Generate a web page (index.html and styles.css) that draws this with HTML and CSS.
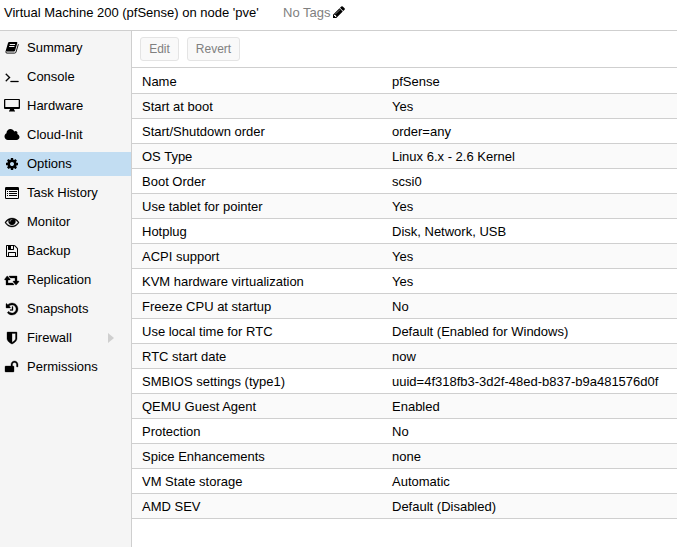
FILE: index.html
```html
<!DOCTYPE html>
<html lang="en">
<head>
<meta charset="utf-8">
<title>Virtual Machine 200</title>
<link rel="stylesheet" href="styles.css">
</head>
<body>
<header class="title-bar">
  <span class="title">Virtual Machine 200 (pfSense) on node 'pve'</span>
  <span class="tags">No Tags</span>
  <svg class="pencil" viewBox="0 0 1792 1792"><path d="M491 1536l91-91-235-235-91 91v107h128v128h107zm523-928q0-22-22-22-10 0-17 7l-542 542q-7 7-7 17 0 22 22 22 10 0 17-7l542-542q7-7 7-17zm-54-192l416 416-832 832h-416v-416zm683 96q0 53-37 90l-166 166-416-416 166-165q36-38 90-38 53 0 91 38l235 234q37 39 37 91z"/></svg>
</header>
<div class="body">
  <nav class="menu">
    <a class="item"><svg class="icon" viewBox="0 0 16 14"><path fill-rule="evenodd" d="M5.200 1H12.600Q13.600 1.100 13.300 2.100L11.100 9.500Q10.800 10.400 9.900 10.400H2.400Q1.500 10.400 1.800 9.400L4 2Q4.300 1 5.200 1zM5.900 3.100L5.600 3.900H10.900L11.200 3.100zM5.300 5.100L5 5.900H10.300L10.600 5.100z"/><path class="line" d="M14.400 3.200L12 11Q11.700 12.100 10.700 12.100H3Q1.700 12.100 1.600 10.500"/></svg>Summary</a>
    <a class="item"><svg class="icon bold" viewBox="-128 0 2048 1792"><path d="M649 983l-466 466q-10 10-23 10t-23-10l-50-50q-10-10-10-23t10-23l393-393-393-393q-10-10-10-23t10-23l50-50q10-10 23-10t23 10l466 466q10 10 10 23t-10 23zm1079 457v64q0 14-9 23t-23 9h-960q-14 0-23-9t-9-23v-64q0-14 9-23t23-9h960q14 0 23 9t9 23z"/></svg>Console</a>
    <a class="item"><svg class="icon" viewBox="0 0 16 14"><path fill-rule="evenodd" d="M1 0H15Q16 0 16 1V9Q16 10 15 10H10Q10 11 11 12V12.500H5V12Q6 11 6 10H1Q0 10 0 9V1Q0 0 1 0zM1.300 1V8H14.700V1z"/></svg>Hardware</a>
    <a class="item"><svg class="icon" viewBox="0 0 2048 1792"><path d="M1984 1152q0 159-112.500 271.500t-271.500 112.500h-1088q-185 0-316.500-131.500t-131.500-316.500q0-132 71-241.500t187-163.500q-2-28-2-43 0-212 150-362t362-150q158 0 286.500 88t187.500 230q70-62 166-62 106 0 181 75t75 181q0 75-41 138 129 30 213 134.500t84 239.500z"/></svg>Cloud-Init</a>
    <a class="item selected"><svg class="icon" viewBox="-128 0 2048 1792"><path d="M1152 896q0-106-75-181t-181-75-181 75-75 181 75 181 181 75 181-75 75-181zm512-109v222q0 12-8 23t-20 13l-185 28q-19 54-39 91 35 50 107 138 10 12 10 25t-9 23q-27 37-99 108t-94 71q-12 0-26-9l-138-108q-44 23-91 38-16 136-29 186-7 28-36 28h-222q-14 0-24.500-8.500t-11.500-21.500l-28-184q-49-16-90-37l-141 107q-10 9-25 9-14 0-25-11-126-114-165-168-7-10-7-23 0-12 8-23 15-21 51-66.500t54-70.500q-27-50-41-99l-183-27q-13-2-21-12.500t-8-23.500v-222q0-12 8-23t19-13l186-28q14-46 39-92-40-57-107-138-10-12-10-24 0-10 9-23 26-36 98.500-107.500t94.500-71.500q13 0 26 10l138 107q44-23 91-38 16-136 29-186 7-28 36-28h222q14 0 24.500 8.500t11.500 21.500l28 184q49 16 90 37l142-107q9-9 24-9 13 0 25 10 129 119 165 170 7 8 7 22 0 12-8 23-15 21-51 66.500t-54 70.500q26 50 41 98l183 28q13 2 21 12.500t8 23.500z"/></svg>Options</a>
    <a class="item"><svg class="icon" viewBox="-128 0 2048 1792"><path fill-rule="evenodd" d="M160 128h1472q160 0 160 160v1216q0 160-160 160h-1472q-160 0-160-160v-1216q0-160 160-160zM128 544v960q0 32 32 32h1472q32 0 32-32v-960q0-32-32-32h-1472q-32 0-32 32zM256 640h128v128h-128zM256 896h128v128h-128zM256 1152h128v128h-128zM512 640h1024v128h-1024zM512 896h1024v128h-1024zM512 1152h1024v128h-1024z"/></svg>Task History</a>
    <a class="item"><svg class="icon bold" viewBox="-128 0 2048 1792"><path d="M1664 960q-152-236-381-353 61 104 61 225 0 185-131.500 316.500t-316.500 131.500-316.500-131.500-131.500-316.500q0-121 61-225-229 117-381 353 133 205 333.500 326.500t434.500 121.500 434.500-121.500 333.500-326.500zm-720-384q0-20-14-34t-34-14q-125 0-214.500 89.500t-89.500 214.500q0 20 14 34t34 14 34-14 14-34q0-86 61-147t147-61q20 0 34-14t14-34zm848 384q0 34-20 69-140 230-376.500 368.500t-499.500 138.500-499.500-139-376.500-368q-20-35-20-69t20-69q140-229 376.500-368t499.500-139 499.500 139 376.500 368q20 35 20 69z"/></svg>Monitor</a>
    <a class="item"><svg class="icon" viewBox="-128 0 2048 1792"><path d="M512 1536h768v-384h-768v384zm896 0h128v-896q0-14-10-38.500t-20-34.500l-281-281q-10-10-34-20t-39-10v416q0 40-28 68t-68 28h-576q-40 0-68-28t-28-68v-416h-128v1280h128v-416q0-40 28-68t68-28h832q40 0 68 28t28 68v416zm-384-928v-320q0-13-9.500-22.500t-22.500-9.500h-192q-13 0-22.500 9.500t-9.500 22.500v320q0 13 9.500 22.500t22.500 9.500h192q13 0 22.500-9.500t9.500-22.500zm640 32v928q0 40-28 68t-68 28h-1344q-40 0-68-28t-28-68v-1344q0-40 28-68t68-28h928q40 0 88 20t76 48l280 280q28 28 48 76t20 88z"/></svg>Backup</a>
    <a class="item"><svg class="icon bold" viewBox="-64 64 2048 1792"><path d="M1216 1568q0 13-9.500 22.500t-22.500 9.500h-960q-8 0-13.500-2t-9-7-5.500-8-3-11.500-1-11.500v-600h-128q-26 0-45-19t-19-45q0-24 15-41l288-384q19-22 49-22t49 22l320 384q15 17 15 41 0 26-19 45t-45 19h-224v384h576q16 0 25 11l160 192q7 10 7 21zm640-416q0 24-15 41l-320 384q-20 23-49 23t-49-23l-320-384q-15-17-15-41 0-26 19-45t45-19h192v-384h-576q-16 0-25-12l-160-192q-7-9-7-20 0-13 9.500-22.500t22.500-9.500h960q8 0 13.500 2t9 7 5.500 8 3 11.500 1 11.500v600h192q26 0 45 19t19 45z"/></svg>Replication</a>
    <a class="item"><svg class="icon bold" viewBox="-128 0 2048 1792"><path d="M1664 896q0 156-61 298t-164 245-245 164-298 61q-172 0-327-72.500t-264-204.500q-7-10-6.500-22.500t8.500-20.500l137-138q10-9 25-9 16 2 23 12 73 95 179 147t225 52q104 0 198.500-40.500t163.500-109.500 109.500-163.500 40.500-198.500-40.500-198.500-109.500-163.500-163.500-109.500-198.500-40.500q-98 0-188 35.500t-160 101.500l137 138q31 30 14 69-17 40-59 40h-448q-26 0-45-19t-19-45v-448q0-42 40-59 39-17 69 14l130 129q107-101 244.500-156.500t284.500-55.500q156 0 298 61t245 164 164 245 61 298zm-640-288v448q0 14-9 23t-23 9h-320q-14 0-23-9t-9-23v-64q0-14 9-23t23-9h224v-352q0-14 9-23t23-9h64q14 0 23 9t9 23z"/></svg>Snapshots</a>
    <a class="item"><svg class="icon bold" viewBox="-128 0 2048 1792"><path d="M1344 960v-640h-448v1137q119-63 213-137 235-184 235-360zm192-768v768q0 86-33.500 170.500t-83 150-118 127.500-126.500 103-121 77.500-89.500 49.500-42.500 20q-12 6-26 6t-26-6q-16-7-42.500-20t-89.500-49.500-121-77.500-126.500-103-118-127.500-83-150-33.500-170.500v-768q0-26 19-45t45-19h1152q26 0 45 19t19 45z"/></svg>Firewall<svg class="arrow" viewBox="0 0 6 10"><path d="M0 0L6 5L0 10z"/></svg></a>
    <a class="item"><svg class="icon bold" viewBox="-64 0 2048 1792"><path d="M1728 576v256q0 26-19 45t-45 19h-64q-26 0-45-19t-19-45v-256q0-106-75-181t-181-75-181 75-75 181v192h96q40 0 68 28t28 68v576q0 40-28 68t-68 28h-960q-40 0-68-28t-28-68v-576q0-40 28-68t68-28h672v-192q0-185 131.500-316.500t316.500-131.500 316.500 131.500 131.500 316.500z"/></svg>Permissions</a>
  </nav>
  <main class="content">
    <div class="toolbar"><button class="btn edit" disabled>Edit</button><button class="btn revert" disabled>Revert</button></div>
    <div class="grid">
      <div class="row"><span>Name</span><span>pfSense</span></div>
      <div class="row"><span>Start at boot</span><span>Yes</span></div>
      <div class="row"><span>Start/Shutdown order</span><span>order=any</span></div>
      <div class="row"><span>OS Type</span><span>Linux 6.x - 2.6 Kernel</span></div>
      <div class="row"><span>Boot Order</span><span>scsi0</span></div>
      <div class="row"><span>Use tablet for pointer</span><span>Yes</span></div>
      <div class="row"><span>Hotplug</span><span>Disk, Network, USB</span></div>
      <div class="row"><span>ACPI support</span><span>Yes</span></div>
      <div class="row"><span>KVM hardware virtualization</span><span>Yes</span></div>
      <div class="row"><span>Freeze CPU at startup</span><span>No</span></div>
      <div class="row"><span>Use local time for RTC</span><span>Default (Enabled for Windows)</span></div>
      <div class="row"><span>RTC start date</span><span>now</span></div>
      <div class="row"><span>SMBIOS settings (type1)</span><span>uuid=4f318fb3-3d2f-48ed-b837-b9a481576d0f</span></div>
      <div class="row"><span>QEMU Guest Agent</span><span>Enabled</span></div>
      <div class="row"><span>Protection</span><span>No</span></div>
      <div class="row"><span>Spice Enhancements</span><span>none</span></div>
      <div class="row"><span>VM State storage</span><span>Automatic</span></div>
      <div class="row"><span>AMD SEV</span><span>Default (Disabled)</span></div>
    </div>
  </main>
</div>
</body>
</html>
```
FILE: styles.css
```css
* { box-sizing: border-box; }
body {
  margin: 0;
  height: 547px;
  display: flex;
  flex-direction: column;
  overflow: hidden;
  background: #fff;
  color: #000;
  font: 13px/16px "Liberation Sans", Arial, sans-serif;
  white-space: nowrap;
}
.title-bar {
  height: 31px;
  padding: 5px 0 0 4px;
  display: flex;
  align-items: flex-start;
  border-bottom: 1px solid #cfcfcf;
}
.title { width: 279px; }
.tags { width: 49px; color: #808080; }
.pencil { width: 14px; height: 14px; }
.body { flex: 1; display: flex; }
.menu {
  width: 132px;
  padding-top: 5px;
  display: flex;
  flex-direction: column;
  gap: 5px;
  background: #f5f5f5;
  border-right: 1px solid #cfcfcf;
}
.item {
  height: 24px;
  padding-left: 4px;
  display: flex;
  align-items: center;
}
.selected { background: #c2ddf2; }
.icon { width: 16px; height: 14px; margin-right: 7px; }
.bold { stroke: #000; stroke-width: 40; }
.line { fill: none; stroke: #000; stroke-width: 0.9; }
.arrow { width: 6px; height: 10px; margin: 0 17px 0 auto; fill: #cfcfcf; }
.content { flex: 1; }
.toolbar {
  height: 37px;
  padding: 6px 8px;
  display: flex;
  gap: 8px;
  border-bottom: 1px solid #cfcfcf;
}
.btn {
  height: 24px;
  padding: 0;
  border: 1px solid #e4e4e4;
  border-radius: 3px;
  background: #f9f9f9;
  color: #808080;
  font: 12px/16px "Liberation Sans", Arial, sans-serif;
}
.edit { width: 39px; }
.revert { width: 53px; }
.row {
  height: 25px;
  padding: 0 10px;
  display: grid;
  grid-template-columns: 250px 1fr;
  line-height: 25px;
  border-bottom: 1px solid #cfcfcf;
}
.row:first-child { height: 26px; padding-top: 1px; }
.row:nth-child(even) { background: #fafafa; }
```
